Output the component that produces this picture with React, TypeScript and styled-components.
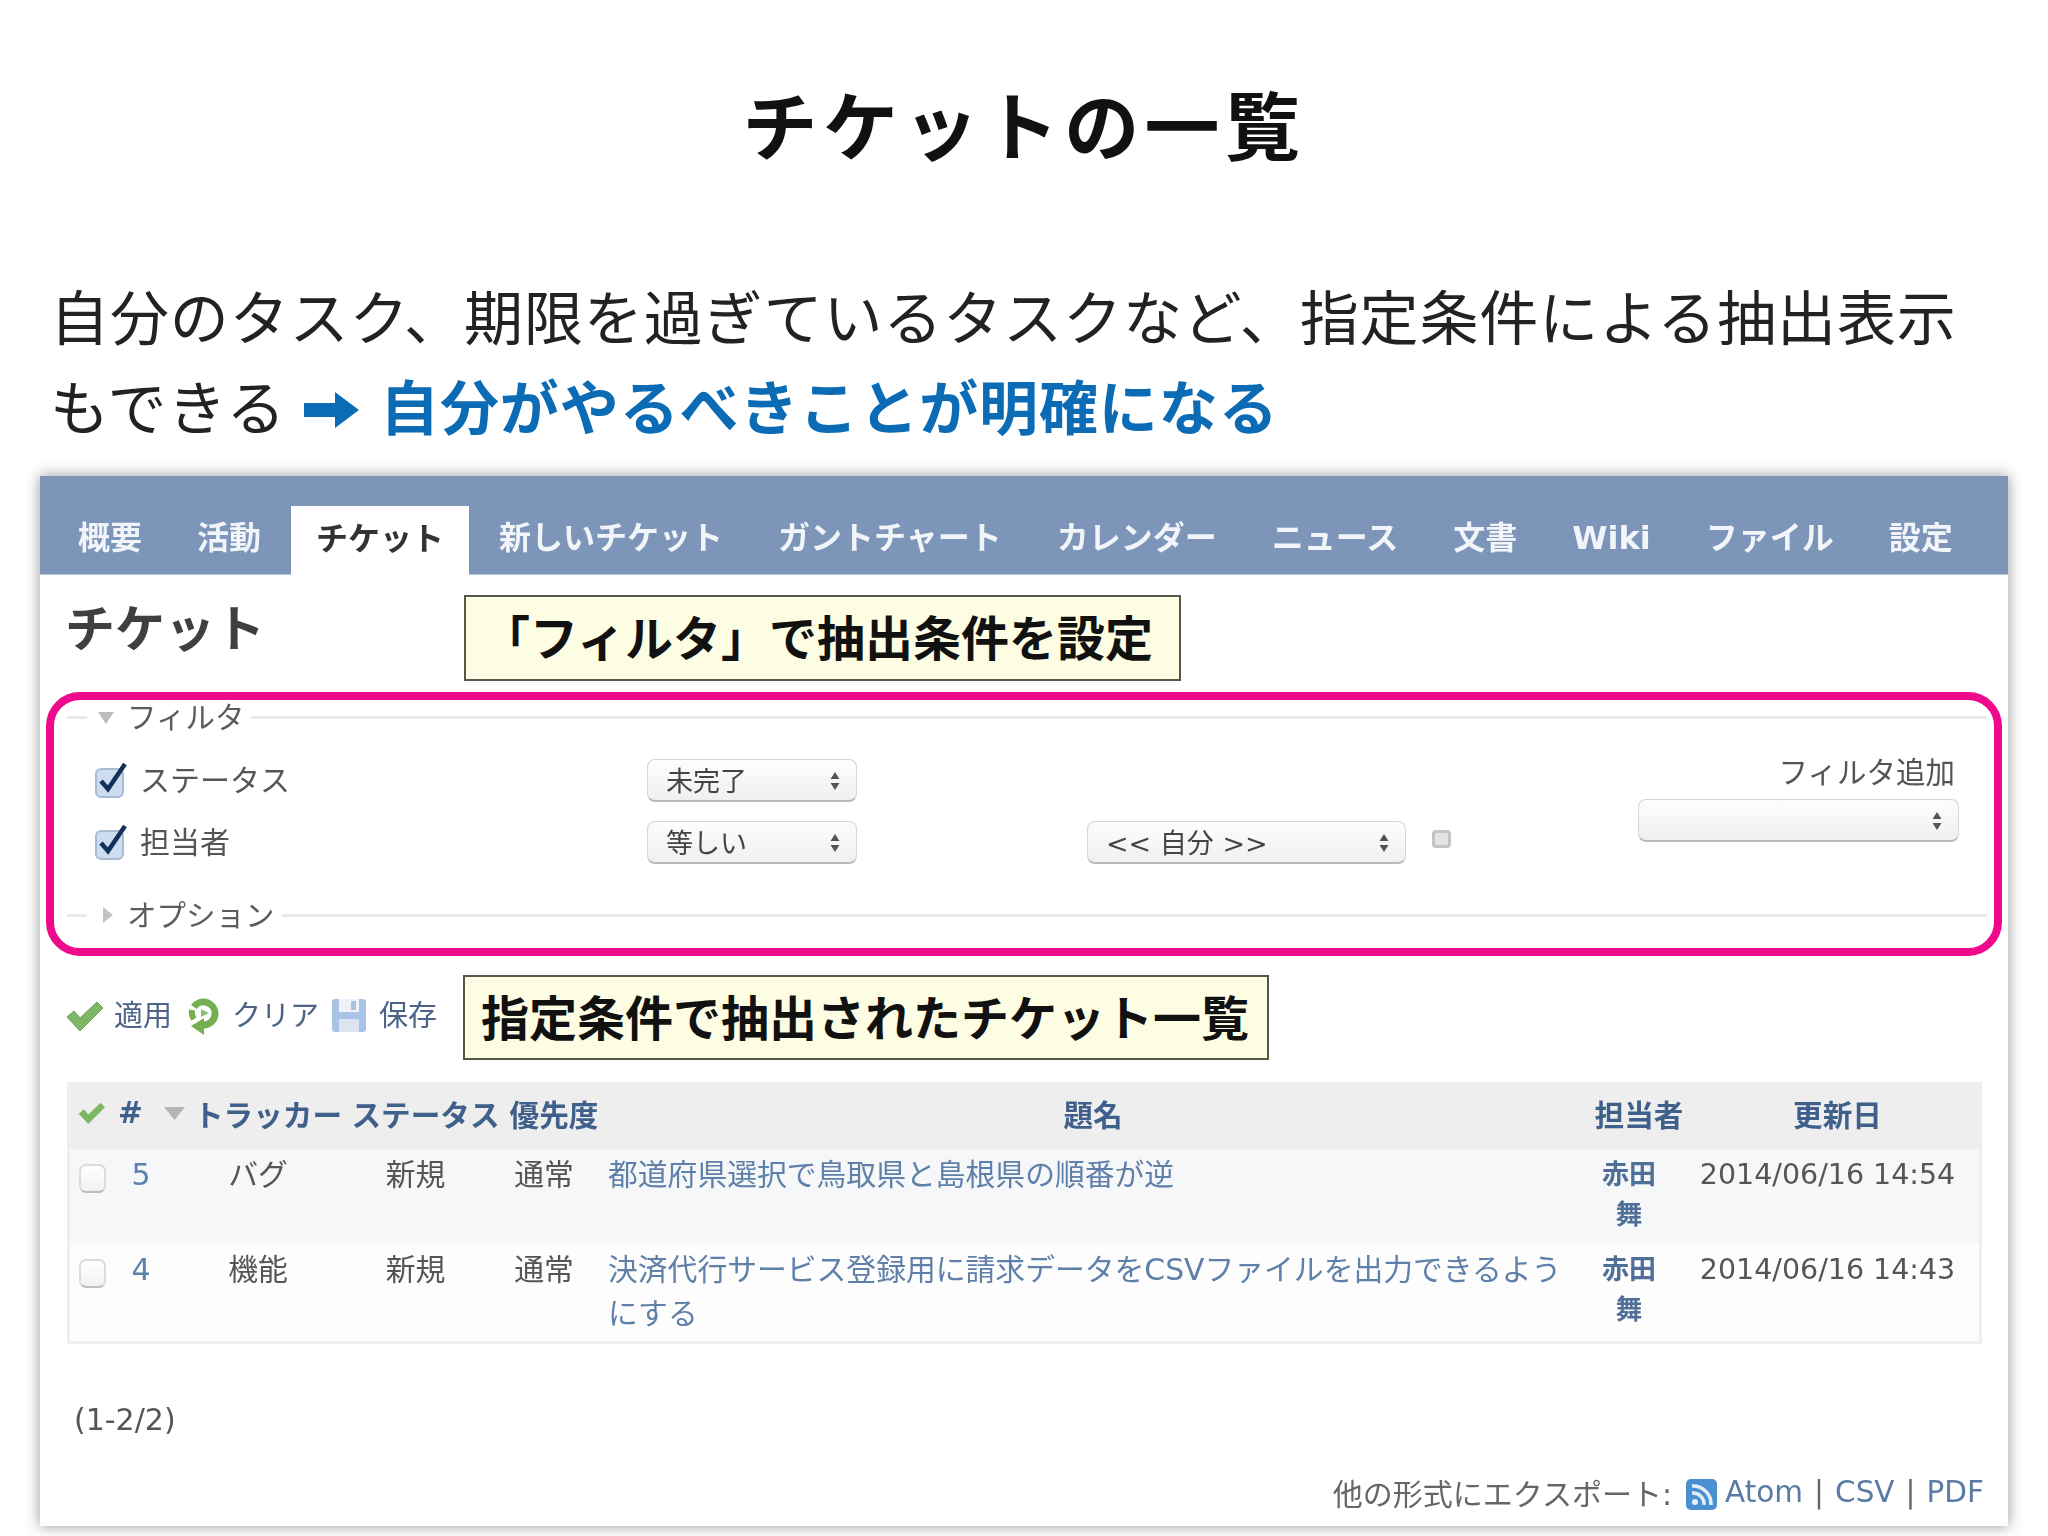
import React from "react";
import styled, { createGlobalStyle, css } from "styled-components";

const GlobalStyle = createGlobalStyle`
  html, body { margin: 0; padding: 0; background: #fff; }
  * { box-sizing: border-box; }
`;

const jp = `"Noto Sans CJK JP", sans-serif`;
const ui = `"DejaVu Sans", "Noto Sans CJK JP", sans-serif`;
const soft = css`filter: blur(0.7px);`;

const Page = styled.div`
  width: 2048px;
  height: 1536px;
  overflow: hidden;
  background: #fff;
  font-family: ${jp};
`;

const Title = styled.h1`
  margin: 73px 0 0;
  height: 100px;
  line-height: 100px;
  text-align: center;
  font-size: 75px;
  font-weight: 700;
  letter-spacing: 5.4px;
  color: #111;
`;

const Lead = styled.p`
  margin: 97px 0 0;
  padding: 0 0 0 50px;
  font-size: 59px;
  letter-spacing: 0.9px;
  line-height: 90px;
  color: #222;
  white-space: nowrap;
`;

const Strong = styled.strong`
  font-weight: 700;
  color: #0b6cb5;
`;

const ArrowIcon = styled.svg`
  width: 55px;
  height: 36px;
  margin: 0 21px 0 18px;
  vertical-align: 2px;
`;

const Panel = styled.section`
  margin: 26px 0 0 40px;
  width: 1968px;
  height: 1050px;
  background: #fff;
  box-shadow: 0 0 14px rgba(0, 0, 0, 0.42);
`;

const NavBar = styled.nav`
  display: flex;
  align-items: flex-end;
  gap: 5px;
  height: 99px;
  padding-left: 13px;
  background: #7c95b8;
  border-bottom: 1px solid #b9c7da;
`;

const Tab = styled.a<{ $active?: boolean }>`
  height: 69px;
  padding: 0 25px 5px;
  line-height: 66px;
  font-family: ${ui};
  font-size: 32px;
  font-weight: 700;
  white-space: nowrap;
  color: ${(p) => (p.$active ? "#333" : "#f1f4f8")};
  background: ${(p) => (p.$active ? "#fff" : "transparent")};
  margin-bottom: ${(p) => (p.$active ? "-1px" : "0")};
  ${soft}
`;

const HeadRow = styled.div`
  display: flex;
  align-items: flex-start;
  padding: 20px 0 0 25px;
`;

const Heading = styled.h2`
  margin: 0;
  width: 399px;
  line-height: 60px;
  font-size: 50px;
  font-weight: 700;
  color: #3f3f3f;
  ${soft}
`;

const Callout = styled.div<{ $w: number; $h: number }>`
  width: ${(p) => p.$w}px;
  height: ${(p) => p.$h}px;
  padding-left: 16px;
  border: 2px solid #55564c;
  background: #fdfde3;
  color: #111;
  font-size: 48px;
  font-weight: 700;
  line-height: ${(p) => p.$h - 9}px;
  white-space: nowrap;
`;

const FilterFrame = styled.div`
  margin: 11px 6px 0;
  height: 264px;
  padding-bottom: 16px;
  border: 8px solid #ee0a8c;
  border-radius: 34px;
  display: flex;
  flex-direction: column;
`;

const Legend = styled.div`
  display: flex;
  align-items: center;
  height: 34px;
  font-size: 29.5px;
  color: #5c5c5c;
  padding: 0 7px 0 13px;
  ${soft}
  &::after {
    content: "";
    flex: 1;
    height: 3px;
    margin-left: 7px;
    background: #e9e9e9;
  }
`;

const LegendText = styled.span`
  margin-top: -4px;
`;

const LegendLead = styled.span`
  width: 20px;
  height: 3px;
  background: #e9e9e9;
`;

const Caret = styled.svg`
  width: 16px;
  height: 18px;
  margin: 0 13px 0 11px;
`;

const FilterBody = styled.div`
  flex: 1;
  display: flex;
  justify-content: space-between;
  padding-right: 35px;
  ${soft}
`;

const FilterRows = styled.div`
  display: flex;
  flex-direction: column;
  gap: 19px;
  padding-top: 25px;
`;

const FilterRow = styled.div`
  display: grid;
  grid-template-columns: 593px 440px 345px 24px;
  align-items: center;
  height: 43px;
`;

const FilterName = styled.label`
  display: flex;
  align-items: center;
  padding-left: 41px;
  font-size: 30px;
  line-height: 36px;
  color: #555;
`;

const NameText = styled.span`
  margin-top: -6px;
`;

const CheckedBox = styled.svg`
  width: 33px;
  height: 36px;
  margin-right: 12px;
  margin-top: -2px;
`;

const Select = styled.div<{ $w: number }>`
  position: relative;
  width: ${(p) => p.$w}px;
  height: 43px;
  padding-left: 18px;
  border-radius: 8px;
  border: 1px solid #d6d6d6;
  border-bottom: 2px solid #b9b9b9;
  background: linear-gradient(#fdfdfd, #f0f0f0);
  font-family: ${ui};
  font-size: 27px;
  line-height: 44px;
  color: #444;
  white-space: nowrap;
`;

const SelectArrows = styled.svg`
  position: absolute;
  right: 15px;
  top: 11px;
  width: 12px;
  height: 20px;
`;

const Dot = styled.span`
  width: 19px;
  height: 18px;
  margin-top: -7px;
  border-radius: 4px;
  background: #e4e4e4;
  border: 3px solid #c4c4c4;
`;

const AddFilter = styled.div`
  padding-top: 16px;
  display: flex;
  flex-direction: column;
  align-items: flex-end;
  font-size: 29.5px;
  line-height: 40px;
  color: #555;
`;

const AddLabel = styled.span`
  margin: 0 4px 9px 0;
`;

const ActionRow = styled.div`
  display: flex;
  padding: 19px 0 0 26px;
`;

const Actions = styled.div`
  width: 397px;
  height: 85px;
  display: flex;
  align-items: center;
  padding-bottom: 10px;
  font-size: 29px;
  color: #4d6488;
  white-space: nowrap;
  ${soft}
`;

const ActionIcon = styled.svg<{ $w: number; $h: number; $l: number; $r: number; $top: number }>`
  flex: none;
  width: ${(p) => p.$w}px;
  height: ${(p) => p.$h}px;
  margin: ${(p) => p.$top}px ${(p) => p.$r}px 0 ${(p) => p.$l}px;
`;

const TicketTable = styled.div`
  margin: 22px 0 0 27px;
  width: 1915px;
  border: 3px solid #eeeeee;
  border-top: 0;
  ${soft}
`;

const gridCols = "43px 76px 158px 157px 100px 978px 114px 283px";

const HeaderRow = styled.div`
  display: grid;
  grid-template-columns: ${gridCols};
  height: 67px;
  align-items: center;
  margin: 0 -3px;
  padding: 0 3px 5px;
  background: #eeeeee;
  font-family: ${ui};
  font-size: 29.6px;
  font-weight: 700;
  color: #40608c;
  text-align: center;
  white-space: nowrap;
`;

const TicketRow = styled.div<{ $h: number; $bg: string }>`
  display: grid;
  grid-template-columns: ${gridCols};
  height: ${(p) => p.$h}px;
  background: ${(p) => p.$bg};
  font-family: ${ui};
  font-size: 29.8px;
  line-height: 44px;
  color: #555;
`;

const Cell = styled.div`
  padding: 4px 20px 0 0;
  text-align: center;
`;

const NumCell = styled(Cell)`
  font-size: 30px;
  color: #5a82ad;
`;

const SubjectCell = styled.a`
  padding: 4px 20px 0 4px;
  color: #5f80a8;
`;

const AssigneeCell = styled.a`
  display: block;
  width: 94px;
  padding: 6px 18px 0;
  font-size: 27px;
  font-weight: 700;
  line-height: 40px;
  text-align: center;
  color: #4f6f99;
`;

const DateCell = styled(Cell)`
  font-size: 28.5px;
  white-space: nowrap;
  color: #555;
`;

const RowCheck = styled.span`
  display: block;
  width: 27px;
  height: 29px;
  margin: 15px 0 0 9px;
  border-radius: 7px;
  border: 2px solid #dcdcdc;
  border-bottom-color: #bdbdbd;
  background: linear-gradient(#fff, #f1f1f1);
`;

const HeadMark = styled.span`
  display: flex;
  align-items: center;
  padding-left: 8px;
`;

const HeadSort = styled.span`
  display: flex;
  align-items: center;
  gap: 21px;
  padding-left: 5px;
`;

const Pagination = styled.div`
  margin: 56px 0 0 34px;
  line-height: 40px;
  font-family: ${ui};
  font-size: 30px;
  color: #555;
  ${soft}
`;

const ExportRow = styled.div`
  display: flex;
  justify-content: flex-end;
  align-items: center;
  margin-top: 32px;
  padding-right: 24px;
  height: 40px;
  font-family: ${ui};
  font-size: 29.5px;
  color: #666;
  white-space: nowrap;
  ${soft}
`;

const ExportLabel = styled.span`
  font-size: 30px;
`;

const ExportLink = styled.a`
  color: #5a7ba6;
`;

const Sep = styled.span`
  margin: 0 11px;
`;

const RssIcon = styled.svg`
  width: 31px;
  height: 31px;
  margin: 4px 8px 0 14px;
`;

const UpDown = () => (
  <SelectArrows viewBox="0 0 12 20">
    <path d="M6 1 10.5 8H1.5Z M6 19 1.5 12H10.5Z" fill="#555" />
  </SelectArrows>
);

const CheckBoxChecked = () => (
  <CheckedBox viewBox="0 0 33 36">
    <rect x="1" y="7" width="27" height="28" rx="5" fill="#cddcee" stroke="#a9bbd2" strokeWidth="2" />
    <path d="M6 19 13 27 30 2" fill="none" stroke="#12315a" strokeWidth="4.5" />
  </CheckedBox>
);

const Row1Subject = "都道府県選択で鳥取県と島根県の順番が逆";
const Row2Subject = "決済代行サービス登録用に請求データをCSVファイルを出力できるようにする";
const tabs = ["概要", "活動", "チケット", "新しいチケット", "ガントチャート", "カレンダー", "ニュース", "文書", "Wiki", "ファイル", "設定"];

export default function App() {
  return (
    <Page>
      <GlobalStyle />
      <Title>チケットの一覧</Title>
      <Lead>
        自分のタスク、期限を過ぎているタスクなど、指定条件による抽出表示
        <br />
        もできる
        <ArrowIcon viewBox="0 0 55 36">
          <path d="M0 11H31V0L55 18 31 36V25H0Z" fill="#0b6cb5" />
        </ArrowIcon>
        <Strong>自分がやるべきことが明確になる</Strong>
      </Lead>
      <Panel>
        <NavBar>
          {tabs.map((t) => (
            <Tab key={t} $active={t === "チケット"}>{t}</Tab>
          ))}
        </NavBar>
        <HeadRow>
          <Heading>チケット</Heading>
          <Callout $w={717} $h={86}>「フィルタ」で抽出条件を設定</Callout>
        </HeadRow>
        <FilterFrame>
          <Legend>
            <LegendLead />
            <Caret viewBox="0 0 16 18">
              <path d="M0 4H16L8 16Z" fill="#bcbcbc" />
            </Caret>
            <LegendText>フィルタ</LegendText>
          </Legend>
          <FilterBody>
            <FilterRows>
              <FilterRow>
                <FilterName><CheckBoxChecked /><NameText>ステータス</NameText></FilterName>
                <Select $w={210}>未完了<UpDown /></Select>
              </FilterRow>
              <FilterRow>
                <FilterName><CheckBoxChecked /><NameText>担当者</NameText></FilterName>
                <Select $w={210}>等しい<UpDown /></Select>
                <Select $w={319}>&lt;&lt; 自分 &gt;&gt;<UpDown /></Select>
                <Dot />
              </FilterRow>
            </FilterRows>
            <AddFilter>
              <AddLabel>フィルタ追加</AddLabel>
              <Select $w={321}><UpDown /></Select>
            </AddFilter>
          </FilterBody>
          <Legend>
            <LegendLead />
            <Caret viewBox="0 0 16 18">
              <path d="M5 1 15 9 5 17Z" fill="#c4c4c4" />
            </Caret>
            <LegendText>オプション</LegendText>
          </Legend>
        </FilterFrame>
        <ActionRow>
          <Actions>
            <ActionIcon $w={37} $h={30} $l={0} $r={11} $top={6} viewBox="0 0 37 30">
              <path d="M1 16 8 10 14 17 31 1 37 7 14 30Z" fill="#7db765" stroke="#6aa351" strokeWidth="1" />
            </ActionIcon>
            適用
            <ActionIcon $w={31} $h={37} $l={16} $r={13} $top={8} viewBox="0 0 31 37">
              <path d="M6 9A11.5 11.5 0 0 1 27 16 11.5 11.5 0 0 1 15 27" fill="none" stroke="#74b04f" strokeWidth="7" />
              <path d="M4 12A11.5 11.5 0 0 0 6 21" fill="none" stroke="#74b04f" strokeWidth="6" />
              <path d="M16 20V37L3 28Z" fill="#74b04f" />
              <path d="M13 11 21 15 13 19Z" fill="#8fbf74" />
            </ActionIcon>
            クリア
            <ActionIcon $w={34} $h={33} $l={13} $r={13} $top={6} viewBox="0 0 34 33">
              <rect width="34" height="33" rx="3" fill="#a9c3e6" />
              <rect x="7" y="0" width="20" height="13" fill="#eef3fa" />
              <rect x="7" y="20" width="20" height="13" fill="#dbe5f2" />
              <rect x="19" y="2" width="5" height="9" fill="#a9c3e6" />
            </ActionIcon>
            保存
          </Actions>
          <Callout $w={806} $h={85}>指定条件で抽出されたチケット一覧</Callout>
        </ActionRow>
        <TicketTable>
          <HeaderRow>
            <HeadMark>
              <svg width="27" height="22" viewBox="0 0 37 30">
                <path d="M1 16 8 10 14 17 31 1 37 7 14 30Z" fill="#7db765" />
              </svg>
            </HeadMark>
            <HeadSort>
              #
              <svg width="21" height="13" viewBox="0 0 21 13">
                <path d="M0 0H21L10.5 13Z" fill="#b5b5b5" />
              </svg>
            </HeadSort>
            <span>トラッカー</span>
            <span>ステータス</span>
            <span>優先度</span>
            <span>題名</span>
            <span>担当者</span>
            <span>更新日</span>
          </HeaderRow>
          <TicketRow $h={95} $bg="#f6f7f8">
            <RowCheck />
            <NumCell>5</NumCell>
            <Cell>バグ</Cell>
            <Cell>新規</Cell>
            <Cell>通常</Cell>
            <SubjectCell>{Row1Subject}</SubjectCell>
            <AssigneeCell>赤田舞</AssigneeCell>
            <DateCell>2014/06/16 14:54</DateCell>
          </TicketRow>
          <TicketRow $h={97} $bg="#fdfdfe">
            <RowCheck />
            <NumCell>4</NumCell>
            <Cell>機能</Cell>
            <Cell>新規</Cell>
            <Cell>通常</Cell>
            <SubjectCell>{Row2Subject}</SubjectCell>
            <AssigneeCell>赤田舞</AssigneeCell>
            <DateCell>2014/06/16 14:43</DateCell>
          </TicketRow>
        </TicketTable>
        <Pagination>(1-2/2)</Pagination>
        <ExportRow>
          <ExportLabel>他の形式にエクスポート:</ExportLabel>
          <RssIcon viewBox="0 0 31 31">
            <rect width="31" height="31" rx="5" fill="#4a8fd0" />
            <circle cx="9" cy="23" r="3" fill="#e3eef9" />
            <path d="M6 14A11 11 0 0 1 18 26M6 7A18 18 0 0 1 25 26" fill="none" stroke="#e3eef9" strokeWidth="3.5" />
          </RssIcon>
          <ExportLink>Atom</ExportLink>
          <Sep>|</Sep>
          <ExportLink>CSV</ExportLink>
          <Sep>|</Sep>
          <ExportLink>PDF</ExportLink>
        </ExportRow>
      </Panel>
    </Page>
  );
}
